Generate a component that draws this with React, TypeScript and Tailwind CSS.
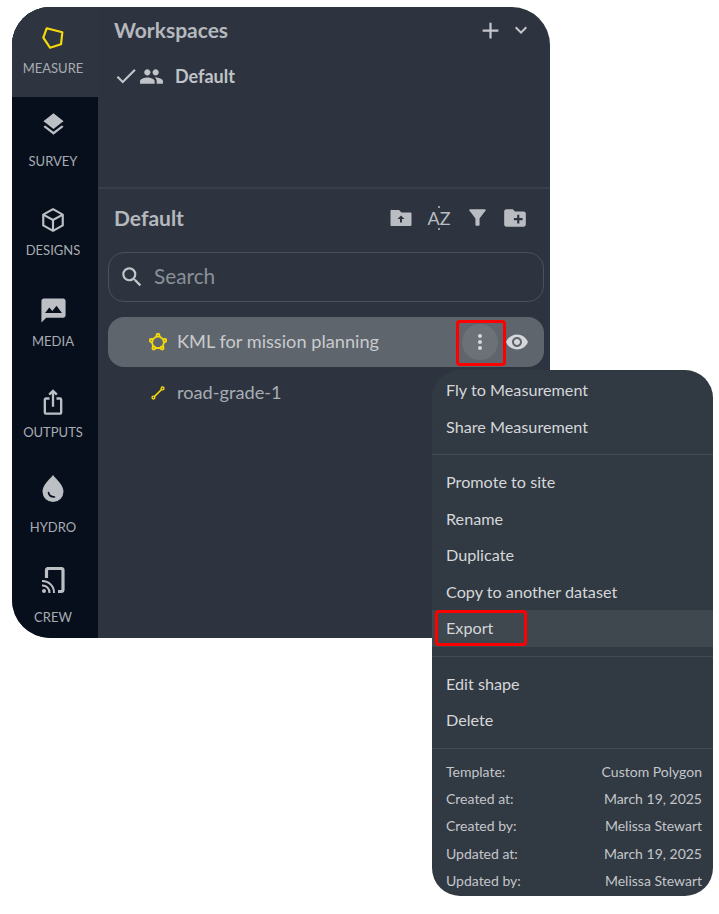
import { ReactNode } from "react";
import {
  MdAdd,
  MdCheck,
  MdCreateNewFolder,
  MdExpandMore,
  MdFilterAlt,
  MdIosShare,
  MdLayers,
  MdMms,
  MdMoreVert,
  MdPeople,
  MdSearch,
  MdVisibility,
} from "react-icons/md";

const ICON_GRAY = "#bcbfc4";

const PentagonIcon = () => (
  <svg width="22" height="22" viewBox="0 0 22 22" fill="none" stroke="#f5d90a" strokeWidth="2.2" strokeLinejoin="round">
    <path d="M4.7 1.3 L20.3 5.3 L19 17.3 L8 20.7 L1.3 10.7 Z" />
  </svg>
);

const CubeIcon = () => (
  <svg width="26" height="26" viewBox="0 0 24 24" fill="none" stroke={ICON_GRAY} strokeWidth="2" strokeLinejoin="round">
    <path d="M12 2 L21 7 V17 L12 22 L3 17 V7 Z" />
    <path d="M3 7 L12 12 L21 7 M12 12 V22" />
  </svg>
);

const DropIcon = () => (
  <svg width="24" height="28" viewBox="0 0 24 28" fill="none">
    <path d="M12 1 C16 6 22.5 11 22.5 17.5 A10.5 10.5 0 0 1 1.5 17.5 C1.5 11 8 6 12 1 Z" fill={ICON_GRAY} />
    <path d="M7.5 18.5 C8 21.5 10.5 23 13.5 23" stroke="#070f1c" strokeWidth="1.6" strokeLinecap="round" />
  </svg>
);

const CrewIcon = () => (
  <svg width="24" height="27" viewBox="0 0 24 27" fill="none">
    <path d="M5.5 11 V3.5 A2 2 0 0 1 7.5 1.5 H20 A2 2 0 0 1 22 3.5 V22.5 A2 2 0 0 1 20 24.5 H17" stroke={ICON_GRAY} strokeWidth="3.2" />
    <circle cx="3" cy="24" r="2" fill={ICON_GRAY} />
    <path d="M1 18.5 A7 7 0 0 1 8.5 26 M1 14 A11.5 11.5 0 0 1 13 26" stroke={ICON_GRAY} strokeWidth="2" />
  </svg>
);

const FolderUpIcon = () => (
  <svg width="24" height="24" viewBox="0 0 24 24">
    <path d="M3 4 H10 L12.5 6.5 H21.5 A1 1 0 0 1 22.5 7.5 V19 A1 1 0 0 1 21.5 20 H2.5 A1 1 0 0 1 1.5 19 V5 A1 1 0 0 1 3 4 Z" fill="#b9bcc1" />
    <path d="M12 9.5 L15.5 13 H13 V16.5 H11 V13 H8.5 Z" fill="#2d3440" />
  </svg>
);

const NODES = [
  [12, 3],
  [21, 10],
  [17.5, 20],
  [6.5, 20],
  [3, 10],
];

const ShapeIcon = () => (
  <svg width="18" height="18" viewBox="0 0 24 24" fill="#5e656d" stroke="#f5d90a" strokeWidth="2.4">
    <path d="M12 3 L21 10 L17.5 20 H6.5 L3 10 Z" fill="none" />
    {NODES.map(([cx, cy]) => (
      <circle key={cx + "-" + cy} cx={cx} cy={cy} r="2" />
    ))}
  </svg>
);

const LineIcon = () => (
  <svg width="14" height="14" viewBox="0 0 16 16" fill="none" stroke="#f5d90a" strokeWidth="1.6">
    <circle cx="2.8" cy="13.2" r="1.6" />
    <circle cx="13.2" cy="2.8" r="1.6" />
    <path d="M4 12 L12 4" strokeWidth="2" />
  </svg>
);

const NAV_ITEMS: { label: string; icon: ReactNode; className: string }[] = [
  { label: "MEASURE", icon: <PentagonIcon />, className: "h-[90px] pt-5 gap-[11px] bg-[#2e3540]" },
  { label: "SURVEY", icon: <MdLayers size={27} color={ICON_GRAY} />, className: "h-[93px] pt-[14px] gap-[15px]" },
  { label: "DESIGNS", icon: <CubeIcon />, className: "h-[87px] pt-[17px] gap-[9px]" },
  { label: "MEDIA", icon: <MdMms size={29} color={ICON_GRAY} />, className: "h-[93px] pt-[19px] gap-[8px]" },
  { label: "OUTPUTS", icon: <MdIosShare size={28} color={ICON_GRAY} />, className: "h-[92px] pt-[18px] gap-[8px]" },
  { label: "HYDRO", icon: <DropIcon />, className: "h-[90px] pt-[12px] gap-[17px]" },
  { label: "CREW", icon: <CrewIcon />, className: "h-[86px] pt-[15px] gap-[15px]" },
];

const MenuItem = ({ children, active }: { children: ReactNode; active?: boolean }) => (
  <div className={`h-[36.5px] flex items-center pl-[14px] text-[16.2px] text-[#d5d7da] ${active ? "bg-[#3f474f]" : ""}`}>
    {children}
  </div>
);

const META = [
  ["Template:", "Custom Polygon"],
  ["Created at:", "March 19, 2025"],
  ["Created by:", "Melissa Stewart"],
  ["Updated at:", "March 19, 2025"],
  ["Updated by:", "Melissa Stewart"],
];

export default function App() {
  return (
    <div className="relative w-[719px] h-[914px] bg-white overflow-hidden pt-[7px] pl-[12px] font-['Lato','Noto_Sans',sans-serif]">
      <div className="flex w-[538px] h-[631px] rounded-[38px] overflow-hidden bg-[#2d3440]">
        {/* Sidebar */}
        <div className="w-[86px] shrink-0 bg-[#070f1c] flex flex-col">
          {NAV_ITEMS.map((item) => (
            <div key={item.label} className={`flex flex-col items-center shrink-0 pr-[4px] ${item.className}`}>
              {item.icon}
              <span className="text-[13px] leading-[16px] text-[#a8acb2]">{item.label}</span>
            </div>
          ))}
        </div>

        {/* Main panel */}
        <div className="flex-1 min-w-0 flex flex-col">
          <div className="h-[182px] border-b-2 border-[#383f4a] shrink-0">
            <div className="flex items-center justify-between pl-[16px] pr-[17px] pt-[9px]">
              <span className="text-[21px] leading-[28px] font-bold text-[#b5b8bd]">Workspaces</span>
              <div className="flex items-center gap-[5px] text-[#c4c6ca]">
                <MdAdd size={27} />
                <MdExpandMore size={24} />
              </div>
            </div>
            <div className="flex items-center pl-[15px] pt-[18px] text-[#c0c3c7]">
              <MdCheck size={26} />
              <MdPeople size={25} />
              <span className="ml-[11px] text-[18px] leading-[28px] font-bold">Default</span>
            </div>
          </div>

          <div className="flex items-center justify-between pl-[16px] pr-[22px] pt-[1px] h-[56px]">
            <span className="text-[21px] font-bold text-[#b5b8bd]">Default</span>
            <div className="flex items-center gap-[14px] text-[#b9bcc1]">
              <FolderUpIcon />
              <span className="relative text-[18px] leading-[24px] w-[24px] text-center">
                AZ
                <span className="absolute left-[11px] top-[0px] w-[2px] h-[2px] rounded-full bg-[#b9bcc1]" />
                <span className="absolute left-[11px] bottom-[0px] w-[2px] h-[2px] rounded-full bg-[#b9bcc1]" />
              </span>
              <MdFilterAlt size={25} />
              <MdCreateNewFolder size={26} className="-ml-[2px]" />
            </div>
          </div>

          <div className="ml-[10px] mr-[6px] mt-[7px] h-[50px] rounded-[16px] border border-[#4a515c] flex items-center pl-[10px] text-[#c4c6ca]">
            <MdSearch size={26} />
            <span className="ml-[9px] text-[20.8px] leading-[24px] -mt-[2px] text-[#8b9097]">Search</span>
          </div>

          <div className="relative ml-[10px] mr-[6px] mt-[15px] h-[50px] rounded-[16px] bg-[#5e656d] flex items-center pl-[41px]">
            <ShapeIcon />
            <span className="ml-[10px] text-[18.2px] text-[#c9cbce]">KML for mission planning</span>
            <div className="ml-auto mr-[15px] flex items-center gap-[7px] text-[#d5d7da]">
              <div className="w-[36px] h-[36px] rounded-full bg-[#6b7177] flex items-center justify-center">
                <MdMoreVert size={24} />
              </div>
              <MdVisibility size={24} />
            </div>
            <div className="absolute left-[348px] top-[3px] w-[50px] h-[46px] border-[3px] border-[#f00] rounded-[4px]" />
          </div>

          <div className="flex items-center h-[52px] pl-[53px]">
            <LineIcon />
            <span className="ml-[12px] text-[18.2px] text-[#a8acb2]">road-grade-1</span>
          </div>
        </div>
      </div>

      {/* Context menu */}
      <div className="absolute left-[432px] top-[370px] w-[281px] h-[526px] rounded-[28px] bg-[#313942] overflow-hidden flex flex-col pt-[2px]">
        <MenuItem>Fly to Measurement</MenuItem>
        <MenuItem>Share Measurement</MenuItem>
        <div className="h-px bg-[#444b55] mt-[9px] mb-[9px]" />
        <MenuItem>Promote to site</MenuItem>
        <MenuItem>Rename</MenuItem>
        <MenuItem>Duplicate</MenuItem>
        <MenuItem>Copy to another dataset</MenuItem>
        <MenuItem active>Export</MenuItem>
        <div className="h-px bg-[#444b55] mt-[9px] mb-[9px]" />
        <MenuItem>Edit shape</MenuItem>
        <MenuItem>Delete</MenuItem>
        <div className="h-px bg-[#444b55] mt-[9px] mb-[9px]" />
        <div className="flex flex-col px-[14px] pr-[11px]">
          {META.map(([label, value]) => (
            <div key={label} className="h-[27.3px] flex items-center justify-between text-[14px] text-[#c4c6ca]">
              <span>{label}</span>
              <span>{value}</span>
            </div>
          ))}
        </div>
        <div className="absolute left-[3px] top-[240px] w-[92px] h-[36px] border-[3px] border-[#f00] rounded-[4px]" />
      </div>
    </div>
  );
}
